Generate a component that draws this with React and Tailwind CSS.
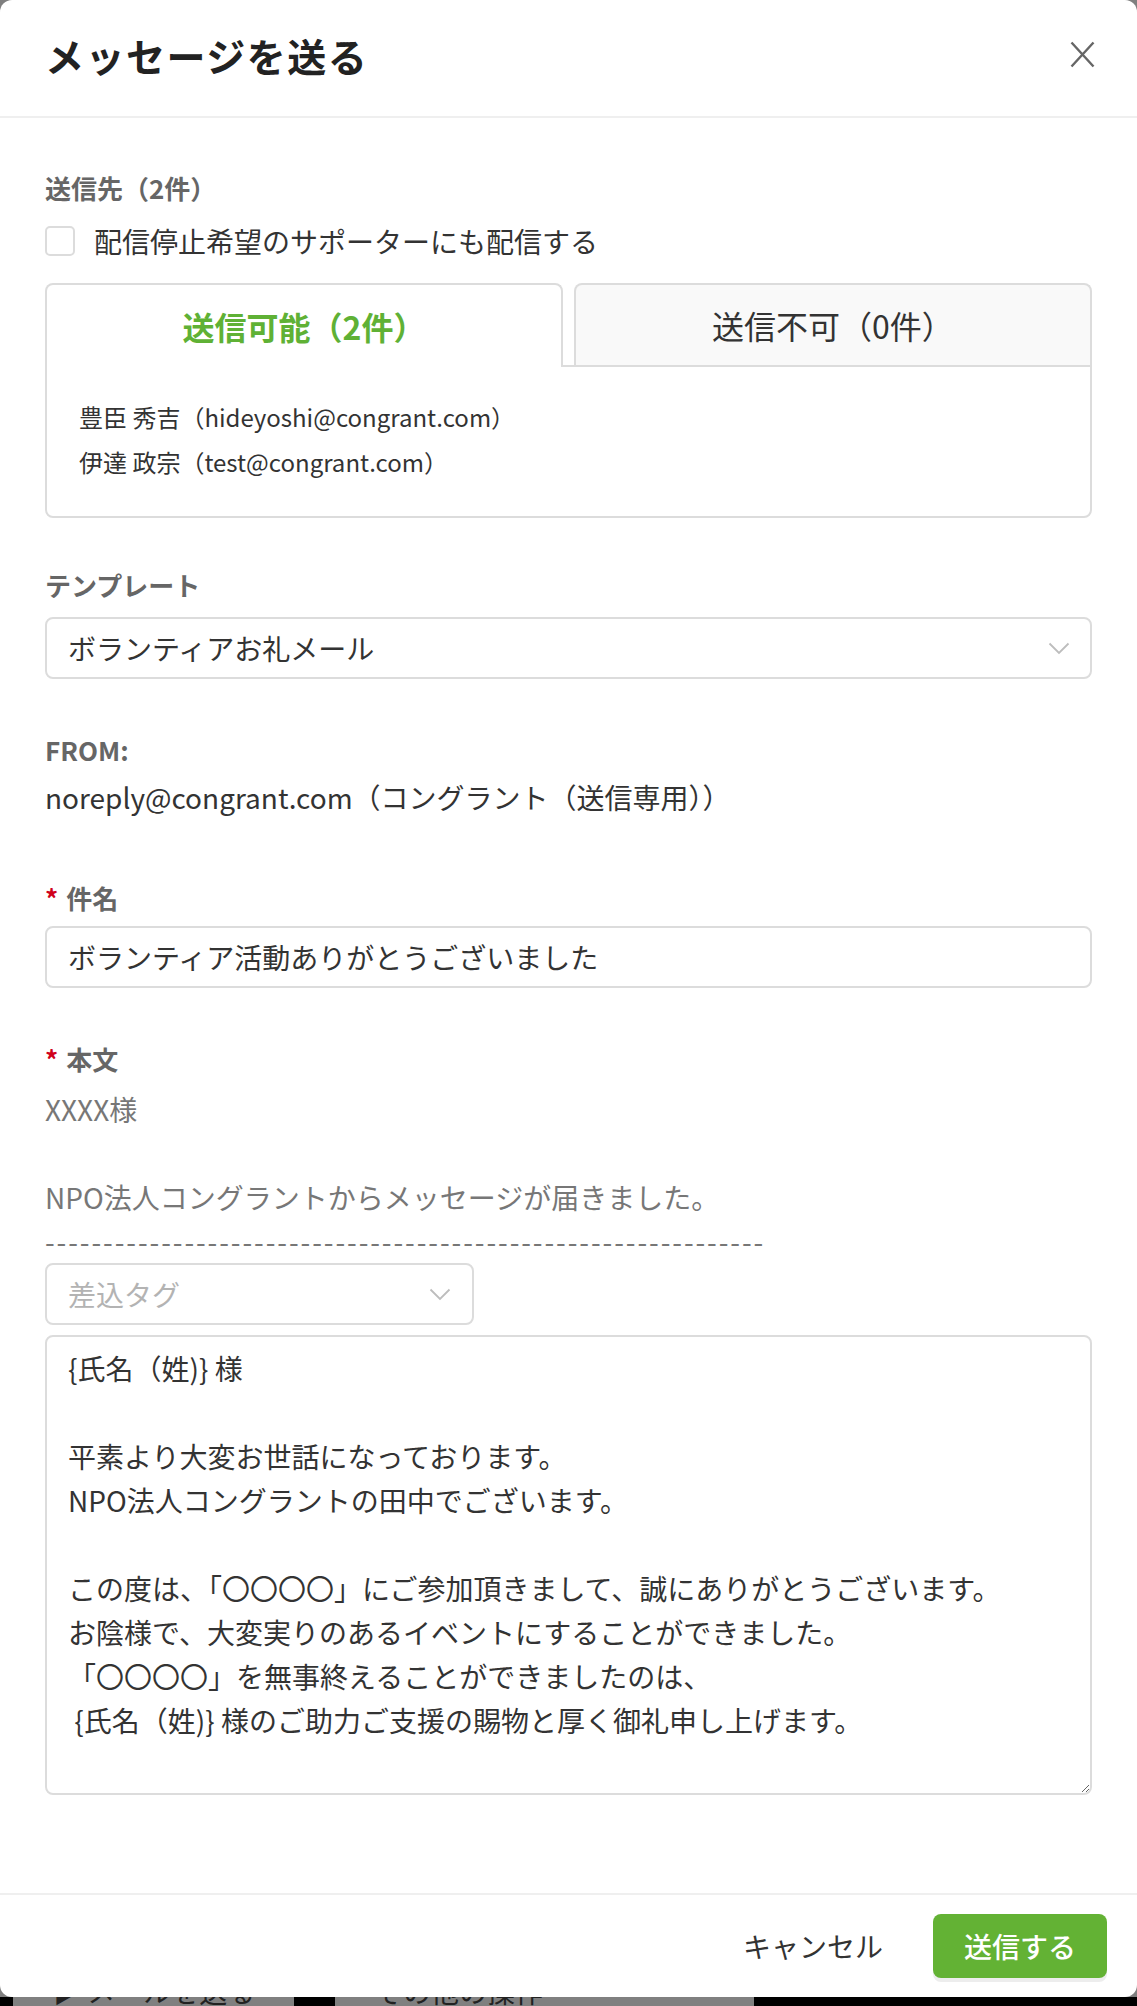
import React from "react";

const font = { fontFamily: '"Noto Sans CJK JP", "Noto Sans", sans-serif' };

const Chevron = () => (
  <svg width="22" height="16" viewBox="0 0 22 16" fill="none">
    <path d="M1.5 3.5 L11 13 L20.5 3.5" stroke="#bdbdbd" strokeWidth="1.8" />
  </svg>
);

const Label = ({ required, children }) => (
  <div className="flex items-center text-[26px] leading-[36px] font-bold text-[#666]">
    {required && <span className="mr-[8px] text-[#d0021b]">*</span>}
    {children}
  </div>
);

const bodyText = `{氏名（姓)} 様

平素より大変お世話になっております。
NPO法人コングラントの田中でございます。

この度は、「〇〇〇〇」にご参加頂きまして、誠にありがとうございます。
お陰様で、大変実りのあるイベントにすることができました。
「〇〇〇〇」を無事終えることができましたのは、
 {氏名（姓)} 様のご助力ご支援の賜物と厚く御礼申し上げます。`;

export default function App() {
  return (
    <div className="w-[1137px] bg-[#7f7f7f]" style={font}>
      <div className="bg-white rounded-[12px] h-[1997px] flex flex-col">
        {/* header */}
        <div className="h-[118px] flex items-center justify-between pl-[45px] pr-[42px] border-b-2 border-[#efefef] shrink-0">
          <h1 className="-mt-[6px] text-[39px] font-bold text-[#222] tracking-[1.5px]">メッセージを送る</h1>
          <svg className="-mt-[8px]" width="25" height="27" viewBox="0 0 25 27" fill="none">
            <path d="M1.5 1.5 L23.5 25.5 M23.5 1.5 L1.5 25.5" stroke="#666" strokeWidth="2.4" />
          </svg>
        </div>

        {/* body */}
        <div className="flex-1 px-[45px] pt-[52px]">
          <Label>送信先（2件）</Label>
          <label className="mt-[15px] flex items-center h-[40px]">
            <span className="w-[30px] h-[30px] rounded-[5px] border-2 border-[#dcdcdc] bg-white" />
            <span className="ml-[19px] text-[28px] leading-[40px] text-[#333]">配信停止希望のサポーターにも配信する</span>
          </label>

          <div className="mt-[22px]">
            <div className="flex items-start gap-[11px]">
              <div className="flex-1 h-[84px] -mb-[2px] relative z-10 bg-white border-2 border-b-0 border-[#dcdcdc] rounded-t-[8px] flex items-center justify-center text-[32px] font-bold text-[#5fb135]">
                送信可能（2件）
              </div>
              <div className="flex-1 h-[82px] bg-[#f9f9f9] border-2 border-b-0 border-[#dcdcdc] rounded-t-[8px] flex items-center justify-center text-[32px] text-[#333]">
                送信不可（0件）
              </div>
            </div>
            <div className="border-2 border-[#dcdcdc] rounded-b-[8px] pl-[32px] pt-[27px] pb-[32px] text-[24px] leading-[45px] text-[#333]">
              <div>豊臣 秀吉（hideyoshi@congrant.com）</div>
              <div>伊達 政宗（test@congrant.com）</div>
            </div>
          </div>

          <div className="mt-[49px]">
            <Label>テンプレート</Label>
          </div>
          <div className="mt-[14px] h-[62px] border-2 border-[#dcdcdc] rounded-[8px] flex items-center justify-between pl-[21px] pr-[20px]">
            <span className="text-[28px] text-[#333]">ボランティアお礼メール</span>
            <Chevron />
          </div>

          <div className="mt-[53px]">
            <Label>FROM:</Label>
          </div>
          <div className="mt-[9px] text-[28px] leading-[40px] text-[#333]">
            noreply@congrant.com（コングラント（送信専用））
          </div>

          <div className="mt-[63px]">
            <Label required>件名</Label>
          </div>
          <div className="mt-[10px] h-[62px] border-2 border-[#dcdcdc] rounded-[8px] flex items-center pl-[21px]">
            <span className="text-[28px] text-[#333]">ボランティア活動ありがとうございました</span>
          </div>

          <div className="mt-[53px]">
            <Label required>本文</Label>
          </div>
          <div className="mt-[10px] text-[28px] leading-[44px] text-[#777]">
            <div>XXXX様</div>
            <div className="h-[44px]" />
            <div>NPO法人コングラントからメッセージが届きました。</div>
            <div className="tracking-[1.9px] whitespace-nowrap">{"-".repeat(62)}</div>
          </div>
          <div className="w-[429px] h-[62px] border-2 border-[#dcdcdc] rounded-[8px] flex items-center justify-between pl-[21px] pr-[21px]">
            <span className="text-[28px] text-[#b3b3b3]">差込タグ</span>
            <Chevron />
          </div>
          <textarea
            readOnly
            defaultValue={bodyText}
            className="mt-[10px] block w-full h-[460px] border-2 border-[#dcdcdc] rounded-[8px] px-[21px] py-[9px] text-[28px] leading-[44px] text-[#333] resize-y outline-none"
            style={font}
          />
        </div>

        {/* footer */}
        <div className="h-[104px] border-t-2 border-[#efefef] flex items-center justify-end pr-[30px] shrink-0">
          <button className="text-[28px] text-[#333] mr-[50px]">キャンセル</button>
          <button className="w-[174px] h-[64px] rounded-[8px] bg-[#63b234] text-white text-[28px] font-medium shadow-[0_4px_0_#ededed]">
            送信する
          </button>
        </div>
      </div>

      {/* dimmed page behind */}
      <div className="h-[9px] bg-black flex gap-[41px] pl-[13px] overflow-hidden">
        <div className="w-[281px] bg-[#808080] text-[28px] leading-[28px] text-[#222] pl-[40px] overflow-hidden">
          <div className="-mt-[20px]">▶ メールを送る</div>
        </div>
        <div className="w-[419px] bg-[#808080] text-[28px] leading-[28px] text-[#222] pl-[40px] overflow-hidden">
          <div className="-mt-[20px]">その他の操作</div>
        </div>
      </div>
    </div>
  );
}
